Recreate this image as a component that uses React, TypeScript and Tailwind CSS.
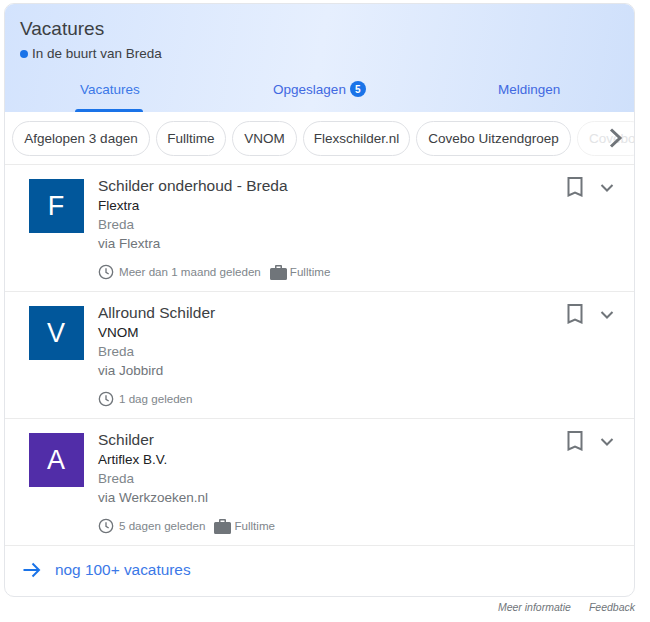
const clock = (
  <svg width="16" height="16" viewBox="0 0 24 24" fill="none" stroke="#70757a" strokeWidth="2" className="shrink-0">
    <circle cx="12" cy="12" r="10" />
    <path d="M12 6.5V12.5L16 15" />
  </svg>
);

const bag = (
  <svg width="17" height="16" viewBox="0 0 17 16" fill="#70757a" className="shrink-0">
    <path d="M6 1h5a1 1 0 0 1 1 1v2h3.500A1.500 1.500 0 0 1 17 5.500V14.500A1.500 1.500 0 0 1 15.500 16H1.500A1.500 1.500 0 0 1 0 14.500V5.500A1.500 1.500 0 0 1 1.500 4H5V2a1 1 0 0 1 1-1zM6.500 2.500V4h4V2.500z" fillRule="evenodd" />
  </svg>
);

type Job = {
  letter: string;
  color: string;
  title: string;
  company: string;
  via: string;
  age: string;
  fulltime: boolean;
};

const jobs: Job[] = [
  { letter: "F", color: "bg-[#01579b]", title: "Schilder onderhoud - Breda", company: "Flextra", via: "via Flextra", age: "Meer dan 1 maand geleden", fulltime: true },
  { letter: "V", color: "bg-[#01579b]", title: "Allround Schilder", company: "VNOM", via: "via Jobbird", age: "1 dag geleden", fulltime: false },
  { letter: "A", color: "bg-[#512da8]", title: "Schilder", company: "Artiflex B.V.", via: "via Werkzoeken.nl", age: "5 dagen geleden", fulltime: true },
];

const chips = [
  { label: "Afgelopen 3 dagen", w: "w-[138px]" },
  { label: "Fulltime", w: "w-[70px]" },
  { label: "VNOM", w: "w-[65px]" },
  { label: "Flexschilder.nl", w: "w-[107px]" },
  { label: "Covebo Uitzendgroep", w: "w-[155px]" },
];

function Row({ job }: { job: Job }) {
  return (
    <div className="flex h-[127px] border-b border-[#ebebeb] pl-[24px] pr-[20px]">
      <div className={`${job.color} mt-[14px] flex h-[54px] w-[55px] shrink-0 items-center justify-center pr-[1px] text-[27px] text-white`}>
        {job.letter}
      </div>
      <div className="ml-[14px] min-w-0 flex-1 pt-[12px]">
        <div className="text-[15.500px] leading-[18px] text-[#3c4043]">{job.title}</div>
        <div className="mt-[3px] text-[13.500px] leading-[16px] text-[#202124]">{job.company}</div>
        <div className="mt-[3px] text-[13.500px] leading-[16px] text-[#80868b]">Breda</div>
        <div className="mt-[3px] text-[13.500px] leading-[16px] text-[#70757a]">{job.via}</div>
        <div className="mt-[11px] flex items-center text-[11.600px] text-[#80868b]">
          {clock}
          <span className="ml-[5px]">{job.age}</span>
          {job.fulltime && (
            <>
              <span className="ml-[9px]">{bag}</span>
              <span className="ml-[3px]">Fulltime</span>
            </>
          )}
        </div>
      </div>
      <div className="flex h-[44px] items-start gap-[17px] pt-[12px]">
        <svg width="16" height="20" viewBox="0 0 16 20" fill="none" stroke="#70757a" strokeWidth="2">
          <path d="M1.500 1h13v17.500L8 15.500l-6.500 3z" />
        </svg>
        <svg width="14" height="8" viewBox="0 0 14 8" fill="none" stroke="#70757a" strokeWidth="2" className="mt-[7px]">
          <path d="M1.500 1 7 6.500 12.500 1" />
        </svg>
      </div>
    </div>
  );
}

export default function App() {
  return (
    <div className="h-[622px] w-[650px] bg-white pl-[4px] pt-[3px] font-['Liberation_Sans',Arial,sans-serif]">
      <div className="h-[594px] w-[631px] overflow-hidden rounded-[10px] border border-[#e4e6ea]">
        <div className="h-[108px] bg-[linear-gradient(100deg,#d3e3fd_0%,#e6effe_50%,#cfe0fb_100%)]">
          <div className="pl-[15px] pt-[14px] text-[19px] leading-[22px] text-[#3c4043]">Vacatures</div>
          <div className="mt-[6px] flex items-center pl-[15px] text-[13.500px] leading-[16px] text-[#3c4043]">
            <span className="mr-[4px] h-[8px] w-[8px] rounded-full bg-[#1a73e8]" />
            In de buurt van Breda
          </div>
          <div className="mt-[9px] grid h-[41px] grid-cols-3 text-[13.500px] text-[#4169e1]">
            <div className="relative flex items-start justify-center pt-[9px] text-[#3b78e7]">
              Vacatures
              <div className="absolute bottom-0 left-[70px] h-[3px] w-[68px] rounded-t-[3px] bg-[#1a73e8]" />
            </div>
            <div className="flex items-start justify-center pt-[9px]">
              Opgeslagen
              <span className="ml-[4px] mt-[1px] flex h-[16px] w-[16px] items-center justify-center rounded-full bg-[#1a73e8] text-[10px] font-bold text-white">5</span>
            </div>
            <div className="flex items-start justify-center pt-[9px]">Meldingen</div>
          </div>
        </div>
        <div className="relative flex h-[53px] items-start gap-[6px] overflow-hidden border-b border-[#ebebeb] pl-[7px] pt-[9px]">
          {chips.map((c) => (
            <div key={c.label} className={`${c.w} flex h-[35px] shrink-0 items-center justify-center rounded-full border border-[#dfe1e5] pt-[1px] text-[13.500px] text-[#3c4043]`}>
              {c.label}
            </div>
          ))}
          <div className="flex h-[35px] shrink-0 items-center rounded-full border border-[#f1f1f1] px-[11px] pt-[1px] text-[13.500px] text-[#e3e4e6]">Covebo</div>
          <svg width="14" height="20" viewBox="0 0 14 20" fill="none" stroke="#70757a" strokeWidth="3" className="absolute right-[11px] top-[16px]">
            <path d="M2 1.500 11 10 2 18.500" />
          </svg>
        </div>
        {jobs.map((j) => (
          <Row key={j.title} job={j} />
        ))}
        <div className="flex h-[50px] items-center pb-[2px] pl-[18px] text-[15.400px] text-[#3b78e7]">
          <svg width="18" height="16" viewBox="0 0 18 16" fill="none" stroke="#1a73e8" strokeWidth="2">
            <path d="M0.500 8H16M9.500 1.500 16 8 9.500 14.500" />
          </svg>
          <span className="ml-[14px]">nog 100+ vacatures</span>
        </div>
      </div>
      <div className="mt-[3px] flex w-[631px] justify-end gap-[18px] text-[10.500px] italic text-[#70757a]">
        <span>Meer informatie</span>
        <span>Feedback</span>
      </div>
    </div>
  );
}
